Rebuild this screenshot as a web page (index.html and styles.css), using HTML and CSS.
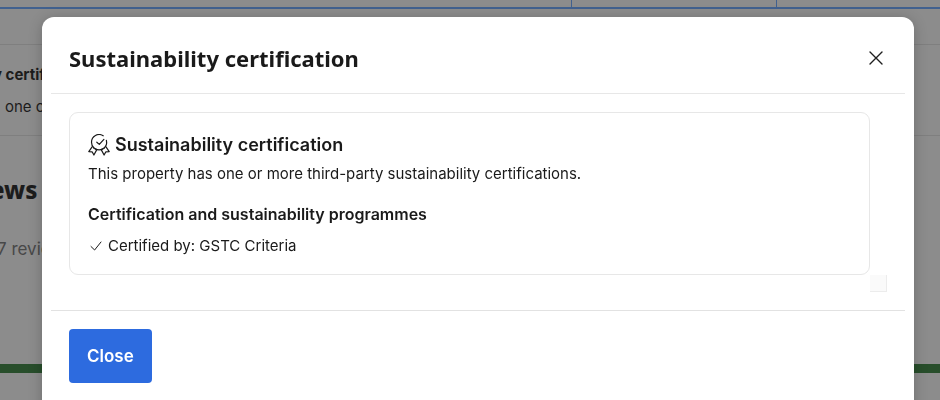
FILE: index.html
```
<!DOCTYPE html>
<html lang="en">
<head>
<meta charset="utf-8">
<meta name="viewport" content="width=device-width, initial-scale=1">
<title>Sustainability certification</title>
<link rel="stylesheet" href="styles.css">
</head>
<body>
<div class="page">
  <div class="rates"><span></span><span></span><span></span></div>
  <div class="spacer"></div>
  <section class="summary">
    <strong>y certif</strong>
    <p>one o</p>
  </section>
  <section class="reviews">
    <h2>ews</h2>
    <p>7 revie</p>
  </section>
  <div class="score-bar"></div>
</div>
<div class="overlay">
  <div class="modal" role="dialog" aria-modal="true" aria-labelledby="modal-title">
    <header class="modal-header">
      <h1 id="modal-title">Sustainability certification</h1>
      <button class="dismiss" type="button" aria-label="Close dialog">
        <svg viewBox="0 0 14 14" width="14" height="14" fill="none" stroke="currentColor" stroke-width="1.4" stroke-linecap="round"><path d="M1 1l12 12M13 1L1 13"/></svg>
      </button>
    </header>
    <div class="modal-body">
      <section class="card">
        <h2><svg class="badge" viewBox="0 0 22 22" width="22" height="22" fill="none" stroke="currentColor" stroke-width="1.2" stroke-linecap="round" stroke-linejoin="round"><path d="M15.2 1.8A7.6 7.6 0 0 0 3.5 8.2c0 2.3.9 4.3 2.4 5.8"/><path d="M18.4 6.4c.6 2.9-.2 5.7-2.2 7.6"/><path d="M8.8 8.2l2.5 2.2 4.6-5"/><path d="M7.2 15c2.6 1.1 5.1 1.1 7.7 0"/><path d="M4.1 12.9L.8 17.6l3.3.2 1.8 3.2 2.9-5.4-2.9-1.6"/><path d="M18 12.9l3.2 4.7-3.3.2-1.8 3.2-2.9-5.4 3-1.6"/></svg>Sustainability certification</h2>
        <p>This property has one or more third-party sustainability certifications.</p>
        <h3>Certification and sustainability programmes</h3>
        <ul>
          <li><svg class="tick" viewBox="0 0 16 16" width="16" height="16" fill="none" stroke="currentColor" stroke-width="1" stroke-linecap="round" stroke-linejoin="round"><path d="M3 8.5l3.6 3.5L13 4"/></svg>Certified by: GSTC Criteria</li>
        </ul>
      </section>
      <span class="scroll-corner"></span>
    </div>
    <footer class="modal-footer">
      <button class="close" type="button">Close</button>
    </footer>
  </div>
</div>
</body>
</html>
```
FILE: styles.css
```
* { box-sizing: border-box; }
html, body { height: 100%; }
body {
  margin: 0;
  overflow: hidden;
  background: #8c8c8c;
  color: #1a1a1a;
  font-family: Inter, "Liberation Sans", sans-serif;
  font-size: 15px;
  line-height: 20px;
}
h1, h2, h3, p, ul { margin: 0; padding: 0; }

.page { overflow: hidden; height: 100%; color: #1c1c1c; }
.rates {
  display: grid;
  grid-template-columns: 572fr 205fr 163fr;
  height: 9px;
  border-bottom: 2px solid #41618f;
}
.rates span + span { border-left: 1px solid #41618f; margin-left: -1px; }
.spacer { height: 35px; }
.summary {
  height: 92px;
  padding-top: 20px;
  border-top: 1px solid #7f7f7f;
  border-bottom: 1px solid #7f7f7f;
}
.summary strong { display: block; margin-left: -7px; white-space: nowrap; }
.summary p { margin: 12px 0 0 5px; }
.reviews { height: 228px; padding-top: 38px; }
.reviews h2 {
  margin-left: -10px;
  font: 800 24px/32px "Noto Sans", sans-serif;
}
.reviews p {
  margin: 33px 0 0 -3px;
  font-size: 17px;
  color: #484848;
}
.score-bar { height: 9px; background: #284e2b; }

.overlay { position: fixed; inset: 0; padding: 17px 26px 0 42px; }
.modal {
  min-height: 420px;
  padding: 0 9px;
  border-radius: 12px;
  background: #fff;
  box-shadow: 0 2px 14px rgba(0, 0, 0, .22);
}
.modal-header {
  display: flex;
  align-items: center;
  justify-content: space-between;
  height: 77px;
  padding: 6px 18px 0;
  border-bottom: 1px solid #e7e7e7;
}
.modal-header h1 { font: 700 22px/32px "Noto Sans", sans-serif; }
.dismiss {
  display: grid;
  padding: 4px;
  border: 0;
  background: none;
  color: #1f1f1f;
}
.modal-body { padding: 18px; }
.card {
  margin-right: 17px;
  padding: 20px 18px 18px;
  border: 1px solid #e7e7e7;
  border-radius: 9px;
}
.card h2 {
  display: flex;
  align-items: center;
  gap: 5px;
  font-size: 18px;
  font-weight: 600;
  line-height: 24px;
}
.card p { margin-top: 7px; }
.card h3 { margin-top: 20px; font-size: 16px; font-weight: 600; line-height: 20px; }
.card ul { margin-top: 12px; list-style: none; }
.card li { display: flex; align-items: center; gap: 4px; }
.scroll-corner {
  display: block;
  width: 17px;
  height: 17px;
  margin-left: auto;
  background: #fafafa;
  border: solid #ececec;
  border-width: 0 1px 1px 0;
}
.modal-footer { padding: 18px; border-top: 1px solid #e2e2e2; }
.close {
  padding: 15px 18px;
  border: 0;
  border-radius: 4px;
  background: #2d6bdf;
  color: #fff;
  font: 600 17px/24px Inter, "Liberation Sans", sans-serif;
}
```
